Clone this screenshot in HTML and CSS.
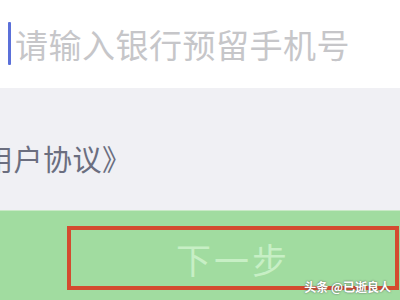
FILE: index.html
```html
<!doctype html>
<html>
<head>
<meta charset="utf-8">
<title>下一步</title>
<link rel="stylesheet" href="styles.css">
</head>
<body>
	<div id="wrap">
		<div class="phoneRow">
			<span class="caret"></span>
			<span class="holder">请输入银行预留手机号</span>
		</div>
		<div class="agreeRow">
			<span class="agree">用户协议》</span>
		</div>
		<div class="btnArea">
			<div class="nextBtn">下一步</div>
		</div>
		<div class="mark">头条 @已逝良人</div>
	</div>
</body>
</html>
```

FILE: styles.css
```css
body {
	margin: 0;
	font-family: "Noto Sans CJK SC", "Noto Sans", sans-serif;
}
#wrap {
	position: relative;
	width: 400px;
	height: 300px;
	overflow: hidden;
}
.phoneRow {
	display: flex;
	align-items: center;
	height: 88px;
	padding-left: 8px;
	box-sizing: border-box;
	background: #fff;
}
.caret {
	width: 3px;
	height: 43px;
	margin-top: -1px;
	margin-right: 4px;
	background: #5b70d9;
	border-radius: 1px;
}
.holder {
	font-size: 33px;
	line-height: 40px;
	color: #c6c6c9;
	letter-spacing: 0.5px;
}
.agreeRow {
	display: flex;
	align-items: center;
	height: 122px;
	background: #f0f0f4;
}
.agree {
	margin-left: -16px;
	margin-top: 17px;
	font-size: 29px;
	line-height: 36px;
	color: #6b6e7f;
	letter-spacing: 0.5px;
}
.btnArea {
	height: 90px;
	padding: 15px 0 0 67px;
	box-sizing: border-box;
	background: #a1dca0;
	border-top: 1px solid #c9e9c6;
}
.nextBtn {
	width: 332px;
	height: 64px;
	box-sizing: border-box;
	border: 4px solid #d44b2f;
	text-align: center;
	font-size: 35px;
	line-height: 58px;
	color: #c7efc5;
	letter-spacing: 3px;
}
.mark {
	position: absolute;
	right: 9px;
	bottom: 6px;
	font-size: 12px;
	line-height: 14px;
	color: #fff;
	font-weight: bold;
	text-shadow: 0 0 2px #555;
}
```
